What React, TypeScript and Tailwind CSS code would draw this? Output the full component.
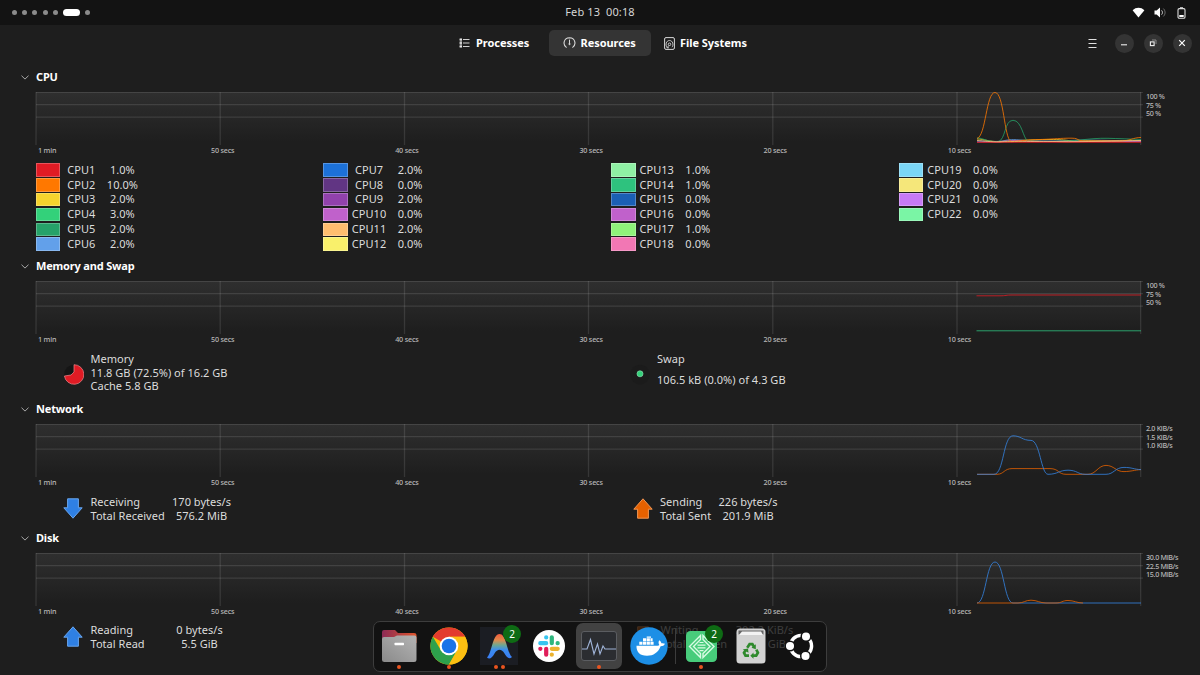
import type { ReactNode } from 'react'

type Cpu = { name: string; value: string; color: string }
type Trace = { color: string; d: string }

const cpuColumns: Cpu[][] = [
  [
    { name: 'CPU1', value: '1.0%', color: 'bg-[#e01b24]' },
    { name: 'CPU2', value: '10.0%', color: 'bg-[#ff7800]' },
    { name: 'CPU3', value: '2.0%', color: 'bg-[#f6d32d]' },
    { name: 'CPU4', value: '3.0%', color: 'bg-[#33d17a]' },
    { name: 'CPU5', value: '2.0%', color: 'bg-[#26a269]' },
    { name: 'CPU6', value: '2.0%', color: 'bg-[#62a0ea]' },
  ],
  [
    { name: 'CPU7', value: '2.0%', color: 'bg-[#1c71d8]' },
    { name: 'CPU8', value: '0.0%', color: 'bg-[#613583]' },
    { name: 'CPU9', value: '2.0%', color: 'bg-[#9141ac]' },
    { name: 'CPU10', value: '0.0%', color: 'bg-[#c061cb]' },
    { name: 'CPU11', value: '2.0%', color: 'bg-[#ffbe6f]' },
    { name: 'CPU12', value: '0.0%', color: 'bg-[#f9f06b]' },
  ],
  [
    { name: 'CPU13', value: '1.0%', color: 'bg-[#8ff0a4]' },
    { name: 'CPU14', value: '1.0%', color: 'bg-[#2ec27e]' },
    { name: 'CPU15', value: '0.0%', color: 'bg-[#1a5fb4]' },
    { name: 'CPU16', value: '0.0%', color: 'bg-[#c061cb]' },
    { name: 'CPU17', value: '1.0%', color: 'bg-[#8ff27a]' },
    { name: 'CPU18', value: '0.0%', color: 'bg-[#f277b4]' },
  ],
  [
    { name: 'CPU19', value: '0.0%', color: 'bg-[#7ad5f5]' },
    { name: 'CPU20', value: '0.0%', color: 'bg-[#f5e77a]' },
    { name: 'CPU21', value: '0.0%', color: 'bg-[#c77af5]' },
    { name: 'CPU22', value: '0.0%', color: 'bg-[#7af5a5]' },
  ],
]

const cpuTraces: Trace[] = [
  { color: '#62a0ea', d: 'M977 49 C990 49 996 50 1002 49 S1010 47 1020 48 S1050 49.5 1070 48.5 S1110 49 1141 48.5' },
  { color: '#f6d32d', d: 'M977 47 C985 47 988 50 1000 49.5 S1030 47.5 1050 47.5 S1068 49.5 1080 49 S1120 49.5 1141 49' },
  { color: '#26a269', d: 'M977 46 C984 46 985 49.5 998 49.7 C1006 48 1004 28.3 1013 28.3 S1023 47 1028 49 C1050 50 1070 49 1080 48 S1098 46 1108 46.3 S1130 47 1141 47.5' },
  { color: '#c061cb', d: 'M977 50 H1000 C1010 48 1020 48 1030 49.5 H1141' },
  { color: '#ff7800', d: 'M977 46.5 C986 44 986 0.5 995 0.5 S1004 46 1011 49.7 C1020 49 1025 48 1040 47.5 S1055 46.5 1068 46.2 S1074 48 1084 49 H1120 C1130 49 1133 45.5 1141 45.5' },
  { color: '#e01b24', d: 'M977 50.4 H1141' },
  { color: '#ffbe6f', d: 'M977 48.5 C985 49 990 50 1000 49.8 S1040 49.2 1060 49.6 S1120 48.8 1141 48.5' },
]

const memoryTraces: Trace[] = [
  { color: '#e01b24', d: 'M976.5 14.8 H1000 C1006 14.8 1006 14 1012 14 H1141' },
  { color: '#2ec27e', d: 'M976.5 49.8 H1141' },
]

const networkTraces: Trace[] = [
  { color: '#e66100', d: 'M977 50.3 H997 C1004 50.3 1004 44.6 1012 44.6 H1050 C1059 44.6 1058 50.3 1066 50.3 H1088 C1096 50.3 1098 41.4 1106 41.4 S1116 47.8 1124 47.6 S1134 46 1141 45.6' },
  { color: '#3584e4', d: 'M977 50.3 H994 C1004 50.3 1003 11.8 1013 11.8 C1021 11.8 1022 16.4 1031 16.4 C1040 16.4 1041 50.3 1048 50.3 C1058 50.3 1059 46.2 1068 46.2 S1078 50.3 1085 50.3 H1106 C1114 50.3 1115 43.4 1124 43.4 C1132 43.4 1134 45.4 1141 45.6' },
]

const diskTraces: Trace[] = [
  { color: '#3584e4', d: 'M977 50 C986 50 986 9 995 9 S1004 50 1013 50 H1141' },
  { color: '#e66100', d: 'M977 50 H1018 C1024 50 1025 47.2 1031 47.2 S1040 50 1046 50 H1056 C1062 50 1062 47.5 1068 47.5 S1077 50 1083 50' },
]

function Graph({ id, traces, scale }: { id: string; traces: Trace[]; scale: string[] }) {
  return (
    <div className="mt-[4px] ml-[35px] flex h-16 text-[7.2px] leading-[11px] font-medium text-[#b8b8b8]">
      <div className="w-[1109px] shrink-0">
        <svg width="1109" height="53" viewBox="35 0 1109 53" fill="none" className="block">
          <defs>
            <linearGradient id={id} x1="0" y1="0" x2="0" y2="1">
              <stop offset="0" stopColor="#2f2f2f" />
              <stop offset="1" stopColor="#1e1e1e" />
            </linearGradient>
          </defs>
          <rect x="36" y="0" width="1105" height="50" fill={`url(#${id})`} />
          <g stroke="#fff" strokeOpacity="0.11" strokeWidth="1.3">
            <path d="M36 0.4H1143M36 12.7H1143M36 25.2H1143" />
            <path d="M36 0V53M220.2 0V53M404.5 0V53M588.5 0V53M772.8 0V53M957 0V53M1140.7 0V53" />
          </g>
          {traces.map((t) => (
            <path key={t.color} d={t.d} stroke={t.color} strokeWidth="1" strokeOpacity="0.8" />
          ))}
        </svg>
        <div className="flex pl-[3px] tracking-[-0.2px]">
          <span className="w-[173px]">1 min</span>
          <span className="w-[184.2px]">50 secs</span>
          <span className="w-[184.2px]">40 secs</span>
          <span className="w-[184.2px]">30 secs</span>
          <span className="w-[184.2px]">20 secs</span>
          <span>10 secs</span>
        </div>
      </div>
      <div className="pl-[2px] leading-[8.6px] tracking-[-0.35px] whitespace-nowrap">
        {scale.map((s) => (
          <div key={s}>{s}</div>
        ))}
      </div>
    </div>
  )
}

function Section({ title, className, children }: { title: string; className: string; children: ReactNode }) {
  return (
    <section className={className}>
      <h2 className="flex h-[22px] items-center pl-[21px] text-[11px] font-bold tracking-[-0.18px] text-white">
        <svg width="8" height="5" viewBox="0 0 8 5" fill="none" stroke="#a8a8a8" className="mr-[7px]">
          <path d="M0.5 0.7L4 4.1L7.5 0.7" />
        </svg>
        {title}
      </h2>
      {children}
    </section>
  )
}

function Arrow({ up, fill, stroke }: { up?: boolean; fill: string; stroke: string }) {
  return (
    <svg width="20" height="21" viewBox="0 0 20 21" className={up ? '' : 'rotate-180'}>
      <path d="M10 0.8L19.2 11.2H15.4V20.2H4.6V11.2H0.8Z" fill={fill} stroke={stroke} />
    </svg>
  )
}

function Rates({ icon, rows, label, className }: { icon: ReactNode; rows: string[][]; label: string; className: string }) {
  return (
    <div className={`flex ${className}`}>
      <div className="mr-[7.5px] flex h-[27px] w-5 items-center">{icon}</div>
      <div>
        {rows.map((r) => (
          <div key={r[0]} className="flex leading-[13.7px] whitespace-nowrap">
            <span className={label}>{r[0]}</span>
            <span className="w-[60px] text-center">{r[1]}</span>
          </div>
        ))}
      </div>
    </div>
  )
}

function TopBar() {
  return (
    <div className="flex h-[25px] items-center bg-[#131313] px-[12.3px]">
      <div className="flex w-[400px] items-center gap-[5.1px]">
        <i className="size-[5px] rounded-full bg-[#8b8b8b]" />
        <i className="size-[5px] rounded-full bg-[#8b8b8b]" />
        <i className="size-[5px] rounded-full bg-[#8b8b8b]" />
        <i className="size-[5px] rounded-full bg-[#8b8b8b]" />
        <i className="size-[5px] rounded-full bg-[#8b8b8b]" />
        <i className="h-[7px] w-[17px] rounded-full bg-white" />
        <i className="size-[5px] rounded-full bg-[#8b8b8b]" />
      </div>
      <div className="flex-1 pb-px text-center text-[11px] tracking-[0.12px] whitespace-pre text-[#d6d6d6]">Feb 13  00:18</div>
      <div className="flex w-[400px] items-center justify-end pr-[2px]">
        <svg width="13" height="11" viewBox="0 0 13 11" fill="#fff" className="mr-[9px]">
          <path d="M0.6 3.2C4 -0.1 9 -0.1 12.4 3.2L6.5 10.6Z" />
        </svg>
        <svg width="12" height="11" viewBox="0 0 12 11" className="mr-[11px]">
          <path d="M0.5 3.6H2.6L6 0.6V10.4L2.6 7.4H0.5Z" fill="#fff" />
          <path d="M7.6 3.4C8.7 4.6 8.7 6.4 7.6 7.6" fill="none" stroke="#ddd" />
          <path d="M9.4 1.6C11.6 3.8 11.6 7.2 9.4 9.4" fill="none" stroke="#777" />
        </svg>
        <svg width="9" height="12" viewBox="0 0 9 12" fill="none">
          <path d="M3 0.9H6" stroke="#ddd" strokeWidth="1.4" />
          <rect x="1" y="1.6" width="7" height="9.6" rx="1.3" stroke="#ddd" strokeWidth="1.1" />
          <rect x="2.3" y="8" width="4.4" height="2" fill="#fff" />
        </svg>
      </div>
    </div>
  )
}

function Header() {
  return (
    <header className="flex h-9 items-center pl-[459px] text-[11px] font-bold tracking-[-0.05px] text-white">
      <div className="flex w-[89.500px] items-center">
        <svg width="11" height="10" viewBox="0 0 11 10" className="mr-[6px]">
          <path d="M4 1.5H10.5M4 5H10.5M4 8.5H10.5" stroke="#d0d0d0" />
          <path d="M0.7 0.3H3V9.7H0.7Z" fill="#8b8b8b" />
          <path d="M0.6 1.5H3M0.6 5H3M0.6 8.5H3" stroke="#e4e4e4" strokeWidth="1.6" />
        </svg>
        Processes
      </div>
      <div className="flex h-[26px] w-[102.500px] items-center rounded-[5px] bg-[#343434] pl-[14px]">
        <svg width="13" height="12" viewBox="0 0 13 12" fill="none" stroke="#d8d8d8" className="mr-[5px]">
          <path d="M3.6 10.6C-0.4 8.2 0.2 0.9 6.5 0.7C12.8 0.9 13.4 8.2 9.4 10.6" strokeWidth="1.1" />
          <path d="M6.5 2.6V6.5" />
          <circle cx="6.5" cy="7" r="0.7" fill="#fff" strokeWidth="0.8" />
        </svg>
        Resources
      </div>
      <div className="flex flex-1 items-center pl-[13px]">
        <svg width="11" height="13" viewBox="0 0 11 13" fill="none" stroke="#d8d8d8" className="mr-[5px]">
          <rect x="0.6" y="0.6" width="9.8" height="11.8" rx="1.4" />
          <path d="M3 10.2C1.2 8 2 3.6 5.5 3.5C9 3.6 9.8 8 8 10.2" strokeWidth="0.9" />
          <circle cx="5.5" cy="7.3" r="1.3" strokeWidth="0.9" />
          <path d="M5 8.5L2.8 10.8H5" strokeWidth="0.9" />
        </svg>
        File Systems
      </div>
      <div className="flex items-center gap-[10px] pr-[8.5px]">
        <svg width="9" height="9" viewBox="0 0 9 9" stroke="#e0e0e0" className="mr-[7.500px]">
          <path d="M0.5 0.500H8.5M0.5 4.5H8.5M0.5 8.500H8.5" />
        </svg>
        <div className="flex size-[19px] items-center justify-center rounded-full bg-[#343434]">
          <svg width="8" height="8" viewBox="0 0 8 8" stroke="#eee">
            <path d="M1 5.8H7" strokeWidth="1.1" />
          </svg>
        </div>
        <div className="flex size-[19px] items-center justify-center rounded-full bg-[#343434]">
          <svg width="8" height="8" viewBox="0 0 8 8" fill="none">
            <rect x="1.4" y="2.9" width="3.7" height="3.7" stroke="#f0f0f0" strokeWidth="1.1" />
            <path d="M3 1H7V5" stroke="#888" />
          </svg>
        </div>
        <div className="flex size-[19px] items-center justify-center rounded-full bg-[#343434]">
          <svg width="8" height="8" viewBox="0 0 8 8" stroke="#fff" strokeWidth="1.2">
            <path d="M1.2 1.2L6.8 6.8M6.8 1.2L1.2 6.8" />
          </svg>
        </div>
      </div>
    </header>
  )
}

function DockItem({ children, dots = 0, badge, className = 'w-[50px]' }: { children: ReactNode; dots?: number; badge?: string; className?: string }) {
  return (
    <div className={`relative flex h-12 shrink-0 items-center justify-center ${className}`}>
      {children}
      {badge && (
        <span className="absolute top-[3px] right-[3px] flex size-[18px] items-center justify-center rounded-full bg-[#0e6b14] text-[10px] text-white">{badge}</span>
      )}
      {dots > 0 && (
        <div className="absolute inset-x-0 bottom-px flex justify-center gap-[3px]">
          <i className="size-[4px] rounded-full bg-[#e95420]" />
          {dots > 1 && <i className="size-[4px] rounded-full bg-[#e95420]" />}
        </div>
      )}
    </div>
  )
}

function Dock() {
  return (
    <div className="absolute top-[620.500px] left-[373px] flex h-[51px] w-[454px] items-center rounded-[7px] border border-[#3d3d3d] bg-[#101010]/78">
      <DockItem dots={1}>
        <svg width="36" height="34" viewBox="0 0 36 34">
          <defs>
            <linearGradient id="folderBack">
              <stop offset="0" stopColor="#8c2a55" />
              <stop offset="1" stopColor="#e0562c" />
            </linearGradient>
            <linearGradient id="folderFront" x1="0" y1="1" x2="1" y2="0">
              <stop offset="0" stopColor="#8a8a8a" />
              <stop offset="1" stopColor="#b4b4b4" />
            </linearGradient>
          </defs>
          <path d="M1 3Q1 1 3 1H14L17 4H33Q35.500 4 35.500 6V14H1Z" fill="url(#folderBack)" />
          <path d="M1 10Q1 8 3 8H13L16 6.500H33.500Q35.500 6.500 35.500 8.500V30.500Q35.500 33 33 33H3.500Q1 33 1 30.500Z" fill="url(#folderFront)" />
          <rect x="13.500" y="13.800" width="9.500" height="2.400" rx="0.600" fill="#fff" />
        </svg>
      </DockItem>
      <DockItem dots={1}>
        <svg width="38" height="38" viewBox="0 0 38 38">
          <circle cx="19" cy="19" r="18.600" fill="#fbbc05" />
          <path d="M19 19L2.900 9.700A18.600 18.600 0 0 1 35.100 9.700H19Z" fill="#e33b2e" />
          <path d="M2.900 9.700A18.600 18.600 0 0 0 19 37.600L27 23.600L19 19L11 23.600Z" fill="#2da14c" />
          <path d="M19 37.600A18.600 18.600 0 0 0 35.100 9.700H19L27 23.600Z" fill="#fdc012" />
          <circle cx="19" cy="19" r="9.300" fill="#fff" />
          <circle cx="19" cy="19" r="7.300" fill="#1a73e8" />
        </svg>
      </DockItem>
      <DockItem dots={2} badge="2">
        <svg width="38" height="38" viewBox="0 0 38 38">
          <defs>
            <linearGradient id="arcFill" x1="0" y1="0" x2="0" y2="1">
              <stop offset="0" stopColor="#f05a3c" />
              <stop offset="0.25" stopColor="#e08a4c" />
              <stop offset="0.45" stopColor="#6ea890" />
              <stop offset="0.65" stopColor="#3b8cf0" />
              <stop offset="1" stopColor="#3a7df5" />
            </linearGradient>
          </defs>
          <rect width="38" height="38" fill="#1b1d23" />
          <path d="M7 30.500C12 26 12.500 7 19.500 7S27 26 32 30C29 33 26.500 30 24.500 26.500C21.500 21.500 17.500 21.500 14.500 26.500C12.500 30.500 9.500 33 7 30.500Z" fill="url(#arcFill)" />
        </svg>
      </DockItem>
      <DockItem>
        <svg width="32" height="32" viewBox="0 0 32 32">
          <circle cx="16" cy="16" r="16" fill="#fff" />
          <g strokeWidth="4.200" strokeLinecap="round">
            <path d="M13.200 7.300V7.400M7.300 13.200H13.200" stroke="#36c5f0" />
            <path d="M18.800 7.300V13.200M24.600 13.200H24.700" stroke="#2eb67d" />
            <path d="M18.800 18.800H24.700M18.800 24.600V24.700" stroke="#ecb22e" />
            <path d="M13.200 18.800V24.700M7.300 18.800H7.400" stroke="#e01e5a" />
          </g>
        </svg>
      </DockItem>
      <DockItem dots={1}>
        <div className="flex size-[46px] items-center justify-center rounded-[7px] bg-[#424242]">
          <svg width="36" height="30" viewBox="0 0 36 30" fill="none">
            <rect x="0.500" y="0.500" width="35" height="29" rx="2.500" fill="#2b2d31" stroke="#5b5d61" />
            <path d="M1 18H6L9.500 8.500L13 23L16.500 13L19 23L22 15L24 18H35" stroke="#a0b4d8" strokeWidth="1.100" />
          </svg>
        </div>
      </DockItem>
      <DockItem>
        <svg width="38" height="38" viewBox="0 0 38 38">
          <circle cx="19" cy="19" r="18.700" fill="#1d8fe6" />
          <g fill="#fff">
            <path d="M6.500 18.700H27.500C28.500 18.500 29 18.300 29.300 18C28.300 16.200 28.400 14.700 29.300 13.300C30.700 14.200 31.300 15.200 31.400 16.300C32.500 16 34 16.100 35 16.700C34.200 18.400 32.700 19.200 30.600 19.200C28.200 25.500 23.500 28.700 17 28.700C9.500 28.700 6.300 24.700 6.500 18.700Z" />
            <path d="M9.300 14.700H12.500V17.800H9.300ZM13 14.700H16.200V17.800H13ZM16.700 14.700H19.900V17.800H16.700ZM20.400 14.700H23.600V17.800H20.400ZM13 11.200H16.200V14.200H13ZM16.700 11.200H19.900V14.200H16.700ZM20.400 11.200H22.600V14.200H20.400ZM16.700 9.500H21V10.700H16.700Z" />
          </g>
        </svg>
      </DockItem>
      <div className="mx-[0.5px] h-9 w-px bg-[#3c3c3c]" />
      <DockItem dots={1} badge="2">
        <svg width="31" height="31" viewBox="0 0 31 31" fill="none">
          <rect width="31" height="31" rx="4.500" fill="#48cc7b" />
          <g stroke="#d9fbe4" strokeWidth="1.400">
            <path d="M14.500 4.500L3.500 15.500L14.500 26.500V22.500L7.500 15.500L14.500 8.500Z" />
            <path d="M17 4.500L28 15.500L17 26.500V22.500L24 15.500L17 8.500Z" />
            <path d="M13.500 11.500H17.500M11.500 14.200H19.500M11.500 16.900H19.500M13.500 19.600H17.500" strokeWidth="1.200" />
          </g>
        </svg>
      </DockItem>
      <DockItem>
        <svg width="30" height="36" viewBox="0 0 30 36">
          <rect x="0.500" y="0.500" width="29" height="35" rx="3.500" fill="#d2d2d2" />
          <path d="M2.500 2.500H27.500V6.500H2.500Z" fill="#666" />
          <path d="M3 7L6 3.500H25L27 7Z" fill="#f3f3f3" />
          <g fill="none" stroke="#2f8a2d" strokeWidth="2.700">
            <path d="M11.200 19.800L13.600 16.200H16.400L18.200 18.900" />
            <path d="M20.300 21.700L21.900 24.700L20.200 27.700H16.500" />
            <path d="M13 27.700H9.500L8 24.900L9.800 22" />
          </g>
          <path d="M19.800 16.300V21.200L15.500 19.800ZM17.500 24.500V30.700L14.300 27.700ZM6.700 21.600L12 20.400L12.500 24.700Z" fill="#2f8a2d" />
        </svg>
      </DockItem>
      <DockItem className="w-[48px]">
        <svg width="30" height="30" viewBox="0 0 30 30" fill="none">
          <circle cx="16" cy="15" r="10.600" stroke="#fff" strokeWidth="3.400" />
          <g fill="#fff" stroke="#121212" strokeWidth="1.500">
            <circle cx="5" cy="15" r="4.800" />
            <circle cx="21" cy="5.500" r="4.800" />
            <circle cx="20.500" cy="25" r="4.800" />
          </g>
        </svg>
      </DockItem>
    </div>
  )
}

export default function App() {
  return (
    <div className="relative h-[675px] w-[1200px] overflow-hidden bg-[#1e1e1e] font-['Noto_Sans',sans-serif] text-[11px] tracking-[0.03px] text-[#dcdcdc]">
      <TopBar />
      <Header />
      <main className="pt-[5px]">
        <Section title="CPU" className="h-[189px]">
          <Graph id="cpu" traces={cpuTraces} scale={['100 %', '75 %', '50 %']} />
          <div className="flex pt-[6.600px] pl-[35.700px]">
            {cpuColumns.map((col) => (
              <div key={col[0].name} className="w-[287.700px]">
                {col.map((cpu) => (
                  <div key={cpu.name} className="flex h-[14.850px] items-center">
                    <span className={`h-[13.500px] w-[24.500px] border border-white/25 ${cpu.color}`} />
                    <span className="ml-[2.700px] w-[37px] text-center">{cpu.name}</span>
                    <span className="ml-[2.500px] w-[40px] text-center">{cpu.value}</span>
                  </div>
                ))}
              </div>
            ))}
          </div>
        </Section>

        <Section title="Memory and Swap" className="h-[143px]">
          <Graph id="mem" traces={memoryTraces} scale={['100 %', '75 %', '50 %']} />
          <div className="flex pt-[7px] pl-[63.500px] leading-[13.700px]">
            <div className="flex w-[566.500px]">
              <svg width="20" height="21" viewBox="0 0 20 21" className="mt-[11.500px] mr-[7px]">
                <circle cx="10" cy="10.500" r="9.800" fill="#151515" />
                <path d="M10 0.700A9.800 9.800 0 1 1 0.400 12L7 11L10 8Z" fill="#e01b24" stroke="#ee8a8e" strokeWidth="0.700" />
              </svg>
              <div>
                <div>Memory</div>
                <div>11.8 GB (72.5%) of 16.2 GB</div>
                <div>Cache 5.8 GB</div>
              </div>
            </div>
            <svg width="20" height="21" viewBox="0 0 20 21" className="mt-[12px] mr-[7px]">
              <circle cx="10" cy="10.500" r="9.800" fill="#1b1b1b" />
              <circle cx="10" cy="9.800" r="3" fill="#33d17a" stroke="#85dcab" strokeWidth="0.700" />
            </svg>
            <div>
              <div>Swap</div>
              <div className="mt-[7px]">106.5 kB (0.0%) of 4.3 GB</div>
            </div>
          </div>
        </Section>

        <Section title="Network" className="h-[129px]">
          <Graph id="net" traces={networkTraces} scale={['2.0 KiB/s', '1.5 KiB/s', '1.0 KiB/s']} />
          <div className="flex pt-[7px] pl-[63px]">
            <Rates
              className="w-[569.500px]"
              label="w-[81px]"
              icon={<Arrow fill="#2f80e4" stroke="#68a5ee" />}
              rows={[['Receiving', '170 bytes/s'], ['Total Received', '576.2 MiB']]}
            />
            <Rates
              className="w-[200px]"
              label="w-[58px]"
              icon={<Arrow up fill="#e66100" stroke="#f09552" />}
              rows={[['Sending', '226 bytes/s'], ['Total Sent', '201.9 MiB']]}
            />
          </div>
        </Section>

        <Section title="Disk" className="h-[148px]">
          <Graph id="disk" traces={diskTraces} scale={['30.0 MiB/s', '22.5 MiB/s', '15.0 MiB/s']} />
          <div className="flex pt-[6px] pl-[63px]">
            <Rates
              className="w-[570px]"
              label="w-[79px]"
              icon={<Arrow up fill="#2f80e4" stroke="#68a5ee" />}
              rows={[['Reading', '0 bytes/s'], ['Total Read', '5.5 GiB']]}
            />
            <Rates
              className="w-[200px]"
              label="w-[74px]"
              icon={<Arrow fill="#e66100" stroke="#f09552" />}
              rows={[['Writing', '302.2 KiB/s'], ['Total Written', '32.1 GiB']]}
            />
          </div>
        </Section>
      </main>
      <Dock />
    </div>
  )
}
